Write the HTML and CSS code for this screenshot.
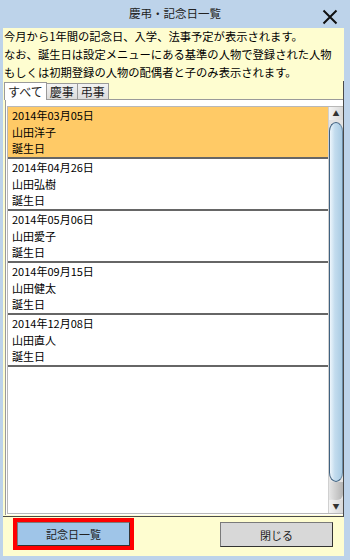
FILE: index.html
```html
<!DOCTYPE html>
<html lang="ja">
<head>
    <meta charset="UTF-8">
    <meta name="viewport" content="width=device-width, initial-scale=1.0">
    <title>慶弔・記念日一覧</title>
    <link rel="stylesheet" href="styles.css">
</head>
<body>
    <div class="window">
        <div class="titlebar">
            <span class="title">慶弔・記念日一覧</span>
            <span class="close">
                <svg width="16" height="16" viewBox="0 0 16 16">
                    <path d="M1.5 1.5 L14.5 14.5 M14.5 1.5 L1.5 14.5" stroke="#111" stroke-width="2" fill="none"/>
                </svg>
            </span>
        </div>

        <div class="client">
            <div class="notice">
                <p>今月から1年間の記念日、入学、法事予定が表示されます。</p>
                <p>なお、誕生日は設定メニューにある基準の人物で登録された人物</p>
                <p>もしくは初期登録の人物の配偶者と子のみ表示されます。</p>
            </div>

            <div class="tabctl">
                <div class="tabs">
                    <div class="tab active">すべて</div>
                    <div class="tab">慶事</div>
                    <div class="tab">弔事</div>
                </div>
                <div class="tabpage">
                    <div class="listbox">
                        <div class="items">
                            <div class="item selected">
                                <div>2014年03月05日</div>
                                <div>山田洋子</div>
                                <div>誕生日</div>
                            </div>
                            <div class="item">
                                <div>2014年04月26日</div>
                                <div>山田弘樹</div>
                                <div>誕生日</div>
                            </div>
                            <div class="item">
                                <div>2014年05月06日</div>
                                <div>山田愛子</div>
                                <div>誕生日</div>
                            </div>
                            <div class="item">
                                <div>2014年09月15日</div>
                                <div>山田健太</div>
                                <div>誕生日</div>
                            </div>
                            <div class="item">
                                <div>2014年12月08日</div>
                                <div>山田直人</div>
                                <div>誕生日</div>
                            </div>
                        </div>
                        <div class="scrollbar">
                            <div class="arrow">▲</div>
                            <div class="thumb"></div>
                            <div class="track"></div>
                            <div class="arrow">▼</div>
                        </div>
                    </div>
                </div>
            </div>

            <div class="footer">
                <div class="highlight">
                    <button class="button primary">記念日一覧</button>
                </div>
                <button class="button">閉じる</button>
            </div>
        </div>
    </div>
</body>
</html>
```

FILE: styles.css
```css
body {
    margin: 0;
    font-family: "Noto Sans CJK JP", "Noto Sans", sans-serif;
    color: #111;
}
.window {
    width: 350px;
    height: 560px;
    background: #bdd3ea;
    display: flex;
    flex-direction: column;
    box-sizing: border-box;
}
.titlebar {
    height: 28px;
    flex: none;
    display: flex;
    align-items: center;
    justify-content: center;
    position: relative;
}
.title {
    font-size: 11.5px;
    color: #222;
    margin-top: -2px;
}
.close {
    position: absolute;
    right: 12px;
    top: 6px;
    width: 16px;
    height: 16px;
}
.client {
    flex: 1;
    margin: 0 6px 4px 3px;
    background: #fefdd0;
    display: flex;
    flex-direction: column;
    min-height: 0;
}
.notice {
    margin-top: -1px;
    padding-left: 1px;
    font-size: 11.3px;
    line-height: 18px;
    color: #000;
}
.notice p {
    margin: 0;
    white-space: nowrap;
}
.tabctl {
    flex: 1;
    display: flex;
    flex-direction: column;
    padding: 0 0 1px 2px;
    border-right: 1px solid #4a4a4a;
    border-bottom: 1px solid #4a4a4a;
    min-height: 0;
}
.tabs {
    display: flex;
    height: 18px;
    margin-left: -1px;
    align-items: flex-end;
}
.tab {
    font-size: 12px;
    line-height: 16px;
    height: 15px;
    padding: 0 3px;
    border: 1px solid #9a9a9a;
    border-bottom: none;
    background: linear-gradient(#f2f2f2, #dcdcdc);
    color: #222;
    margin-right: -1px;
}
.tab.active {
    height: 17px;
    line-height: 18px;
    padding: 0 3px;
    background: #fff;
    position: relative;
    z-index: 1;
    margin-bottom: -1px;
}
.tabpage {
    flex: 1;
    display: flex;
    flex-direction: column;
    border: 1px solid #9a9a9a;
    border-right: none;
    border-bottom: none;
    background: #fff;
    padding: 6px 0 1px 1px;
    min-height: 0;
}
.listbox {
    flex: 1;
    display: flex;
    border: 1px solid #b8b8b8;
    border-right: none;
    min-height: 0;
}
.items {
    flex: 1;
    font-size: 11px;
    line-height: 16.67px;
    color: #000;
}
.item {
    padding-left: 4px;
    height: 50px;
    border-bottom: 2px solid #666;
    background: #fff;
}
.item.selected {
    background: #ffca66;
}
.scrollbar {
    width: 14px;
    display: flex;
    flex-direction: column;
    background: #e4e4e4;
    border-left: 1px solid #d0d0d0;
}
.arrow {
    height: 13px;
    font-size: 7px;
    line-height: 13px;
    text-align: center;
    color: #333;
    background: linear-gradient(to right, #f4f4f4, #d8d8d8);
}
.thumb {
    flex: 1;
    margin-top: 2px;
    border: 1px solid #3f6180;
    border-right-color: #6b8aa6;
    border-radius: 9px 9px 9px 9px / 12px 12px 12px 12px;
    background: linear-gradient(to right, #eef6fc, #c3dcee 40%, #a9cbe3);
}
.track {
    height: 18px;
    background: linear-gradient(to right, #e6e6e6, #b4b4b4);
    border-radius: 0 0 6px 6px;
}
.footer {
    height: 38px;
    flex: none;
    display: flex;
    justify-content: space-between;
    align-items: flex-start;
    padding: 1px 11px 0 10px;
}
.highlight {
    border: 4px solid #f00;
    display: flex;
}
.button {
    width: 113px;
    height: 24px;
    font-family: "Noto Sans CJK JP", "Noto Sans", sans-serif;
    font-size: 11px;
    color: #222;
    background: #d8d8d8;
    border: 1px solid #7a7a7a;
    border-right-color: #333;
    border-bottom-color: #333;
    padding: 0;
    cursor: pointer;
}
.footer > .button {
    margin-top: 4px;
    height: 25px;
}
.button.primary {
    background: #9fc5e8;
}
```
